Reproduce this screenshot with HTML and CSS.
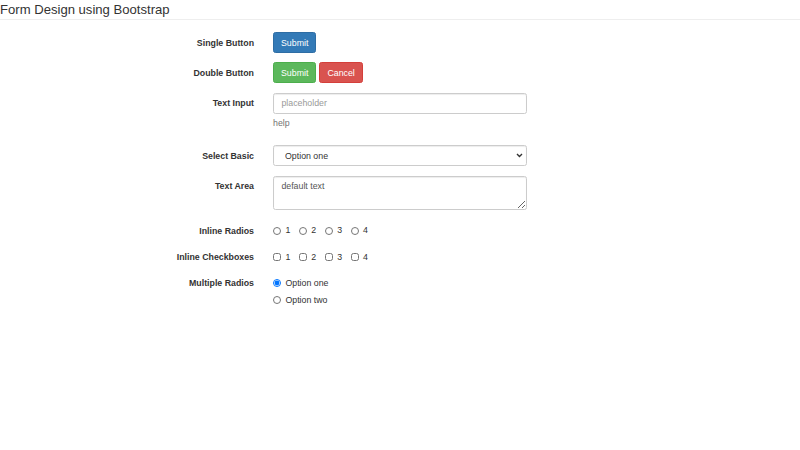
FILE: index.html
```html
<!DOCTYPE html>
<html>
<head>
<meta charset="utf-8">
<link rel="stylesheet" href="styles.css">
</head>
<body>
<div class="header"><h1 class="title">Form Design using Bootstrap</h1></div>
<form class="form">
  <div class="group">
    <label class="lbl">Single Button</label>
    <div class="ctrl"><button type="button" class="btn btn-primary">Submit</button></div>
  </div>
  <div class="group">
    <label class="lbl">Double Button</label>
    <div class="ctrl btns"><button type="button" class="btn btn-success">Submit</button><button type="button" class="btn btn-danger">Cancel</button></div>
  </div>
  <div class="group">
    <label class="lbl">Text Input</label>
    <div class="ctrl">
      <input class="input" type="text" placeholder="placeholder">
      <span class="help">help</span>
    </div>
  </div>
  <div class="group">
    <label class="lbl">Select Basic</label>
    <div class="ctrl">
      <div class="select-wrap">
        <select class="input select"><option>Option one</option><option>Option two</option></select>
        <svg class="chev" width="7" height="5" viewBox="0 0 7 5"><path d="M1 1 L3.5 3.5 L6 1" fill="none" stroke="#333" stroke-width="1.4"/></svg>
      </div>
    </div>
  </div>
  <div class="group">
    <label class="lbl">Text Area</label>
    <div class="ctrl"><textarea class="input area">default text</textarea></div>
  </div>
  <div class="group group-tight">
    <label class="lbl lbl-check">Inline Radios</label>
    <div class="ctrl inline">
      <label class="opt"><input type="radio" name="r1">1</label>
      <label class="opt"><input type="radio" name="r1">2</label>
      <label class="opt"><input type="radio" name="r1">3</label>
      <label class="opt"><input type="radio" name="r1">4</label>
    </div>
  </div>
  <div class="group group-tight">
    <label class="lbl lbl-check">Inline Checkboxes</label>
    <div class="ctrl inline">
      <label class="opt"><input type="checkbox">1</label>
      <label class="opt"><input type="checkbox">2</label>
      <label class="opt"><input type="checkbox">3</label>
      <label class="opt"><input type="checkbox">4</label>
    </div>
  </div>
  <div class="group">
    <label class="lbl lbl-check">Multiple Radios</label>
    <div class="ctrl stack">
      <label class="opt"><input type="radio" name="r2" checked>Option one</label>
      <label class="opt"><input type="radio" name="r2">Option two</label>
    </div>
  </div>
</form>
</body>
</html>
```
FILE: styles.css
```css
html, body {
  margin: 0;
  padding: 0;
  background: #fff;
}
body {
  font-family: "Liberation Sans", Arial, sans-serif;
  font-size: 8.8px;
  line-height: 12.4px;
  color: #333;
}
.header {
  border-bottom: 1px solid #eee;
  height: 19px;
}
.title {
  margin: 0;
  padding-top: 1px;
  font-size: 13.1px;
  line-height: 17px;
  font-weight: normal;
  color: #333;
}
.form {
  margin-top: 12px;
}
.group {
  display: grid;
  grid-template-columns: 254px 254px;
  column-gap: 19px;
  margin-bottom: 9.3px;
}
.group-tight {
  margin-bottom: 8.3px;
}
.lbl {
  text-align: right;
  font-weight: bold;
  padding-top: 4.6px;
}
.lbl-check {
  padding-top: 5.6px;
}
.ctrl {
  display: flex;
  flex-direction: column;
  align-items: flex-start;
}
.btns {
  flex-direction: row;
  gap: 3px;
}
.btn {
  font-family: inherit;
  font-size: 8.8px;
  line-height: 12.4px;
  height: 21px;
  padding: 3.7px 7px;
  border: 1px solid transparent;
  border-radius: 2.5px;
  color: #fff;
  cursor: pointer;
}
.btn-primary { background: #337ab7; border-color: #2e6da4; }
.btn-success { background: #5cb85c; border-color: #4cae4c; }
.btn-danger { background: #d9534f; border-color: #d43f3a; }
.input {
  box-sizing: border-box;
  width: 254px;
  height: 21px;
  padding: 3.7px 7.4px;
  font-family: inherit;
  font-size: 8.8px;
  line-height: 12.4px;
  color: #555;
  background: #fff;
  border: 1px solid #ccc;
  border-radius: 2.5px;
  box-shadow: inset 0 1px 1px rgba(0,0,0,.075);
  margin: 0;
}
.input::placeholder { color: #999; }
.select-wrap {
  position: relative;
  width: 254px;
  height: 21px;
}
.select {
  -webkit-appearance: none;
  appearance: none;
  display: block;
  height: 21px;
  padding: 2px 14px 2px 11px;
  color: #333;
}
.chev {
  position: absolute;
  right: 4px;
  top: 8px;
  pointer-events: none;
}
.area {
  height: 34px;
  resize: vertical;
  display: block;
}
.help {
  display: block;
  margin-top: 3px;
  margin-bottom: 7.2px;
  color: #737373;
}
.inline {
  flex-direction: row;
  padding-top: 5.3px;
  gap: 0;
}
.opt {
  display: flex;
  align-items: center;
  line-height: 12.4px;
  font-weight: normal;
}
.inline .opt { margin-right: 8.6px; }
.opt input {
  width: 8px;
  height: 8px;
  margin: 0 4.4px 0 0;
}
.stack {
  padding-top: 5.3px;
  gap: 4.3px;
}
```
